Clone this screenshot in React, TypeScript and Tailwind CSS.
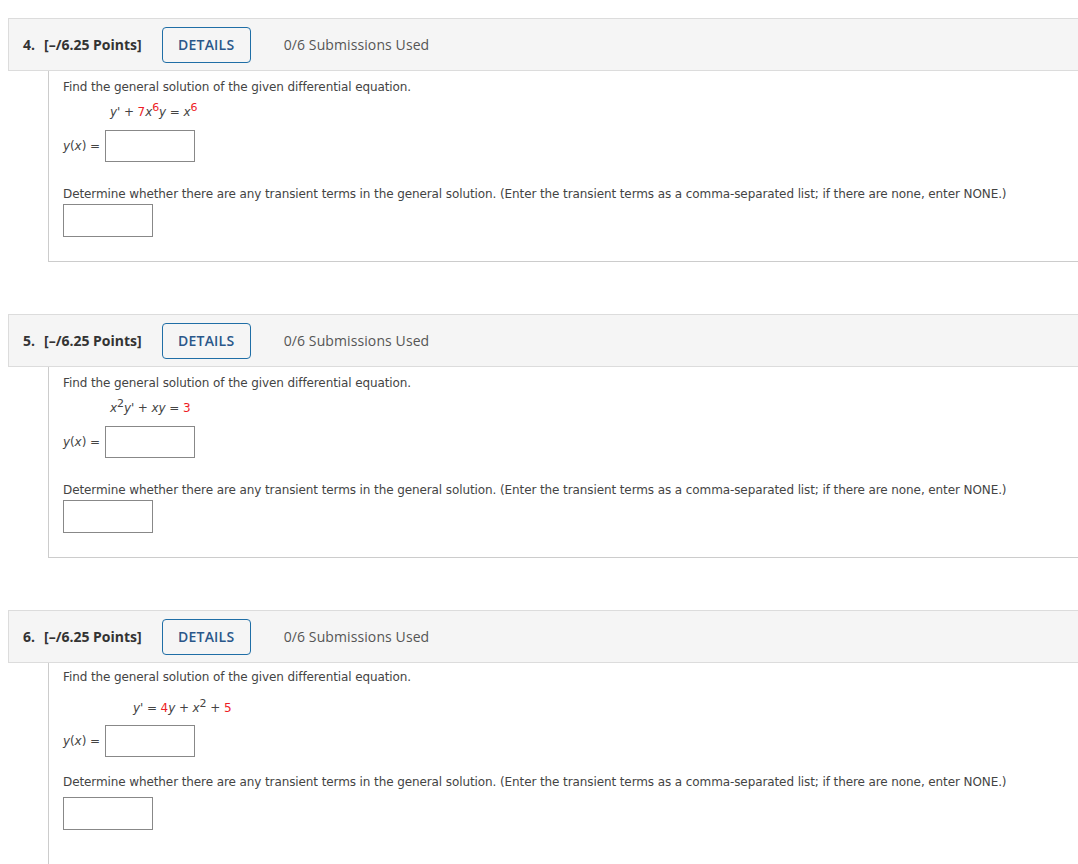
import React from "react";

const R = ({ children }: { children: React.ReactNode }) => (
  <span className="text-[#ee1c25]">{children}</span>
);
const V = ({ children }: { children: React.ReactNode }) => (
  <span className="italic">{children}</span>
);
const Sup = ({ children, red }: { children: React.ReactNode; red?: boolean }) => (
  <sup className={`text-[11px] ${red ? "text-[#ee1c25]" : ""}`}>{children}</sup>
);

function Question({
  num,
  eq,
  last,
}: {
  num: number;
  eq: React.ReactNode;
  last?: boolean;
}) {
  return (
    <div className="mb-[52px]">
      <div className="flex items-center h-[53px] bg-[#f5f5f5] border border-r-0 border-[#dcdcdc] pl-[14px] [font-family:'Open_Sans',sans-serif] text-[#333]">
        <span className="font-bold text-[14px] w-[21px]">{num}.</span>
        <span className="font-bold text-[14px]">[–/6.25 Points]</span>
        <div className="ml-[20px] h-[36px] w-[89px] border border-[#1f6ea6] rounded-[4px] flex items-center justify-center text-[14px] font-semibold text-[#2a578a] tracking-[0.2px]">
          DETAILS
        </div>
        <span className="ml-[33px] text-[14px] text-[#555] tracking-[0.1px]">0/6 Submissions Used</span>
      </div>
      <div
        className={`ml-[40px] border-l border-b border-[#cccccc] pl-[14px] ${last ? "pt-[6px] pb-[60px]" : "pt-[8px] pb-[24px]"} [font-family:'DejaVu_Sans',Verdana,sans-serif] text-[12px] text-[#444] tracking-[-0.1px]`}
      >
        <div className="leading-[16px]">Find the general solution of the given differential equation.</div>
        <div className={`${last ? "ml-[70px] mt-[15px]" : "ml-[47px] mt-[9px]"} leading-[16px]`}>{eq}</div>
        <div className={`flex items-center ${last ? "mt-[9px]" : "mt-[10px]"}`}>
          <span className="w-[42px]">
            <V>y</V>(<V>x</V>) =
          </span>
          <div className="w-[90px] h-[32px] border border-[#888] bg-white" />
        </div>
        <div className={`${last ? "mt-[17px]" : "mt-[24px]"} leading-[16px]`}>
          Determine whether there are any transient terms in the general solution. (Enter the transient terms as a comma-separated list; if there are none, enter NONE.)
        </div>
        <div className={`${last ? "mt-[7px]" : "mt-[2px]"} w-[90px] h-[33px] border border-[#888] bg-white`} />
      </div>
    </div>
  );
}

export default function App() {
  return (
    <div className="bg-white w-[1078px] h-[864px] overflow-hidden pt-[18px] pl-[8px]">
      <Question
        num={4}
        eq={
          <span>
            <V>y</V>' + <R>7</R>
            <V>x</V>
            <Sup red>6</Sup>
            <V>y</V> = <V>x</V>
            <Sup red>6</Sup>
          </span>
        }
      />
      <Question
        num={5}
        eq={
          <span>
            <V>x</V>
            <Sup>2</Sup>
            <V>y</V>' + <V>xy</V> = <R>3</R>
          </span>
        }
      />
      <Question
        num={6}
        last
        eq={
          <span>
            <V>y</V>' = <R>4</R>
            <V>y</V> + <V>x</V>
            <Sup>2</Sup> + <R>5</R>
          </span>
        }
      />
    </div>
  );
}
